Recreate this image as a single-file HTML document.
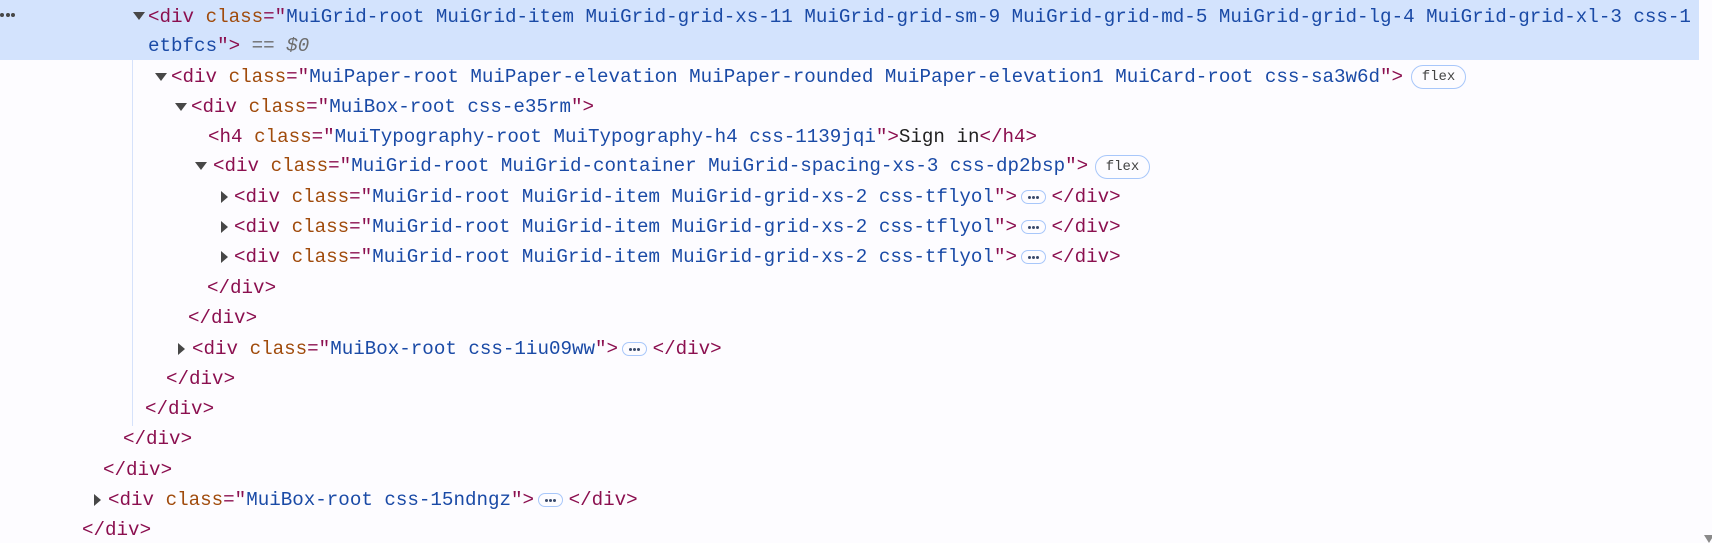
<!DOCTYPE html>
<html><head><meta charset="utf-8"><style>
html,body{margin:0;padding:0;}
body{width:1712px;height:542px;background:#fdfcff;position:relative;overflow:hidden;font-family:"Liberation Mono",monospace;font-size:19.2px;}
.hl{position:absolute;left:0;top:0;width:1699px;height:60px;background:#d3e3fd;}
.guide{position:absolute;left:132px;top:60px;width:1px;height:366px;background:#d6e2fb;}
.l{position:absolute;white-space:pre;line-height:22px;height:22px;color:#1f1f1f;}
.t{color:#8b0f4f;}
.a{color:#a04b0c;}
.v{color:#1a4aa6;}
.g{color:#6d6d6d;font-style:italic;}
.td{position:absolute;width:0;height:0;border-left:6px solid transparent;border-right:6px solid transparent;border-top:8px solid #474747;}
.tr{position:absolute;width:0;height:0;border-top:6px solid transparent;border-bottom:6px solid transparent;border-left:7px solid #474747;}
.flex{position:absolute;height:22px;width:53px;border:1px solid #a8c7fa;border-radius:12px;font-size:14px;color:#444;line-height:22px;text-align:center;}
.dots{position:absolute;width:23px;height:12px;border:1px solid #a8c7fa;border-radius:7px;}
.dots i{position:absolute;top:5px;width:3px;height:3px;border-radius:50%;background:#3a4a6b;}
</style></head><body>
<div class="hl"></div>
<div class="guide"></div>
<div style="position:absolute;left:0;top:13px;width:4px;height:4px;border-radius:50%;background:#474747"></div>
<div style="position:absolute;left:6px;top:13px;width:4px;height:4px;border-radius:50%;background:#474747"></div>
<div style="position:absolute;left:11px;top:13px;width:4px;height:4px;border-radius:50%;background:#474747"></div>

<div class="td" style="left:133px;top:12px"></div>
<div class="l" style="left:148px;top:6px"><span class="t">&lt;div</span> <span class="a">class</span><span class="t">="</span><span class="v">MuiGrid-root MuiGrid-item MuiGrid-grid-xs-11 MuiGrid-grid-sm-9 MuiGrid-grid-md-5 MuiGrid-grid-lg-4 MuiGrid-grid-xl-3 css-1</span></div>
<div class="l" style="left:148px;top:35px"><span class="v">etbfcs</span><span class="t">"&gt;</span> <span class="g">== $0</span></div>

<div class="td" style="left:155px;top:73px"></div>
<div class="l" style="left:171px;top:66px"><span class="t">&lt;div</span> <span class="a">class</span><span class="t">="</span><span class="v">MuiPaper-root MuiPaper-elevation MuiPaper-rounded MuiPaper-elevation1 MuiCard-root css-sa3w6d</span><span class="t">"&gt;</span></div>
<div class="flex" style="left:1411px;top:65px">flex</div>

<div class="td" style="left:175px;top:103px"></div>
<div class="l" style="left:191px;top:96px"><span class="t">&lt;div</span> <span class="a">class</span><span class="t">="</span><span class="v">MuiBox-root css-e35rm</span><span class="t">"&gt;</span></div>

<div class="l" style="left:208px;top:126px"><span class="t">&lt;h4</span> <span class="a">class</span><span class="t">="</span><span class="v">MuiTypography-root MuiTypography-h4 css-1139jqi</span><span class="t">"&gt;</span>Sign in<span class="t">&lt;/h4&gt;</span></div>

<div class="td" style="left:195px;top:162px"></div>
<div class="l" style="left:213px;top:155px"><span class="t">&lt;div</span> <span class="a">class</span><span class="t">="</span><span class="v">MuiGrid-root MuiGrid-container MuiGrid-spacing-xs-3 css-dp2bsp</span><span class="t">"&gt;</span></div>
<div class="flex" style="left:1095px;top:155px">flex</div>

<div class="tr" style="left:221px;top:191px"></div>
<div class="l" style="left:234px;top:186px"><span class="t">&lt;div</span> <span class="a">class</span><span class="t">="</span><span class="v">MuiGrid-root MuiGrid-item MuiGrid-grid-xs-2 css-tflyol</span><span class="t">"&gt;</span>   <span class="t">&lt;/div&gt;</span></div>
<div class="dots" style="left:1021px;top:190px"><i style="left:6px"></i><i style="left:10px"></i><i style="left:14px"></i></div>

<div class="tr" style="left:221px;top:221px"></div>
<div class="l" style="left:234px;top:216px"><span class="t">&lt;div</span> <span class="a">class</span><span class="t">="</span><span class="v">MuiGrid-root MuiGrid-item MuiGrid-grid-xs-2 css-tflyol</span><span class="t">"&gt;</span>   <span class="t">&lt;/div&gt;</span></div>
<div class="dots" style="left:1021px;top:220px"><i style="left:6px"></i><i style="left:10px"></i><i style="left:14px"></i></div>

<div class="tr" style="left:221px;top:251px"></div>
<div class="l" style="left:234px;top:246px"><span class="t">&lt;div</span> <span class="a">class</span><span class="t">="</span><span class="v">MuiGrid-root MuiGrid-item MuiGrid-grid-xs-2 css-tflyol</span><span class="t">"&gt;</span>   <span class="t">&lt;/div&gt;</span></div>
<div class="dots" style="left:1021px;top:250px"><i style="left:6px"></i><i style="left:10px"></i><i style="left:14px"></i></div>

<div class="l" style="left:207px;top:277px"><span class="t">&lt;/div&gt;</span></div>
<div class="l" style="left:188px;top:307px"><span class="t">&lt;/div&gt;</span></div>

<div class="tr" style="left:178px;top:343px"></div>
<div class="l" style="left:192px;top:338px"><span class="t">&lt;div</span> <span class="a">class</span><span class="t">="</span><span class="v">MuiBox-root css-1iu09ww</span><span class="t">"&gt;</span>   <span class="t">&lt;/div&gt;</span></div>
<div class="dots" style="left:622px;top:342px"><i style="left:6px"></i><i style="left:10px"></i><i style="left:14px"></i></div>

<div class="l" style="left:166px;top:368px"><span class="t">&lt;/div&gt;</span></div>
<div class="l" style="left:145px;top:398px"><span class="t">&lt;/div&gt;</span></div>
<div class="l" style="left:123px;top:428px"><span class="t">&lt;/div&gt;</span></div>
<div class="l" style="left:103px;top:459px"><span class="t">&lt;/div&gt;</span></div>

<div class="tr" style="left:94px;top:494px"></div>
<div class="l" style="left:108px;top:489px"><span class="t">&lt;div</span> <span class="a">class</span><span class="t">="</span><span class="v">MuiBox-root css-15ndngz</span><span class="t">"&gt;</span>   <span class="t">&lt;/div&gt;</span></div>
<div class="dots" style="left:538px;top:493px"><i style="left:6px"></i><i style="left:10px"></i><i style="left:14px"></i></div>

<div class="l" style="left:82px;top:519px"><span class="t">&lt;/div&gt;</span></div>

<div style="position:absolute;left:1704px;top:535px;width:0;height:0;border-left:5px solid transparent;border-right:5px solid transparent;border-top:8px solid #8a8a8a"></div>
</body></html>
